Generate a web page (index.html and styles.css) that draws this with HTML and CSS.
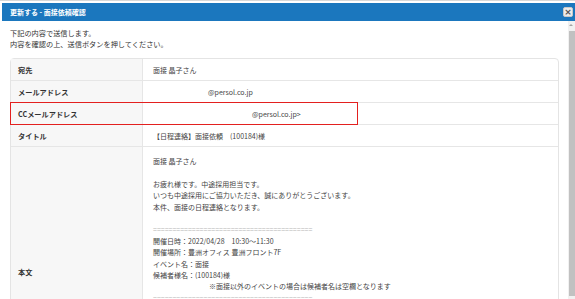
FILE: index.html
```html
<!DOCTYPE html>
<html lang="ja">
<head>
<meta charset="utf-8">
<title>更新する - 面接依頼確認</title>
<link rel="stylesheet" href="styles.css">
</head>
<body>
<div class="frame">
  <div class="modal">
    <div class="modal-header">
      <span class="modal-title">更新する - 面接依頼確認</span>
      <button class="close-btn" type="button">×</button>
    </div>
    <div class="modal-main">
      <div class="modal-content">
        <p class="intro">下記の内容で送信します。<br>内容を確認の上、送信ボタンを押してください。</p>
        <div class="detail">
          <div class="row">
            <div class="label">宛先</div>
            <div class="value">面接 晶子さん</div>
          </div>
          <div class="row">
            <div class="label">メールアドレス</div>
            <div class="value"><span class="blank b1"></span>@persol.co.jp</div>
          </div>
          <div class="row row-marked">
            <div class="label">CCメールアドレス</div>
            <div class="value"><span class="blank b2"></span>@persol.co.jp&gt;</div>
            <div class="mark"></div>
          </div>
          <div class="row">
            <div class="label">タイトル</div>
            <div class="value">【日程連絡】面接依頼　(100184)様</div>
          </div>
          <div class="row row-body">
            <div class="label">本文</div>
            <div class="value body-text">面接 晶子さん

お疲れ様です。中途採用担当です。
いつも中途採用にご協力いただき、誠にありがとうございます。
本件、面接の日程連絡となります。

<span class="rule">=========================================</span>
開催日時：2022/04/28　10:30～11:30
開催場所：豊洲オフィス 豊洲フロント7F
イベント名：面接
候補者様名：(100184)様
　　　　　　　　※面接以外のイベントの場合は候補者名は空欄となります
<span class="rule">=========================================</span>
</div>
          </div>
        </div>
      </div>
      <div class="scrollbar">
        <div class="scroll-arrow"></div>
        <div class="scroll-thumb"></div>
      </div>
    </div>
  </div>
</div>
</body>
</html>
```

FILE: styles.css
```css
html, body {
  margin: 0;
  padding: 0;
  background: #ffffff;
}

.frame {
  width: 575px;
  height: 299px;
  overflow: hidden;
  box-sizing: border-box;
  border-top: 1px solid #d8d8d8;
  padding: 2px 0 0 2px;
  font-family: "Noto Sans CJK JP", "Noto Sans", sans-serif;
  color: #3a3a3a;
}

.modal {
  display: flex;
  flex-direction: column;
  height: 296px;
}

.modal-header {
  height: 18px;
  flex: none;
  background: #1b77be;
  display: flex;
  align-items: center;
  justify-content: space-between;
  padding: 0 2px 0 8px;
}

.modal-title {
  color: #ffffff;
  font-weight: bold;
  font-size: 7px;
  line-height: 1;
}

.close-btn {
  width: 10px;
  height: 10px;
  padding: 0;
  margin: 0;
  border: 1px solid #c9c9c9;
  border-radius: 2px;
  background: #ececec;
  color: #555;
  font-size: 9px;
  font-weight: bold;
  line-height: 7px;
  font-family: "DejaVu Sans", sans-serif;
  display: flex;
  align-items: center;
  justify-content: center;
}

.modal-main {
  flex: 1;
  display: flex;
  min-height: 0;
}

.modal-content {
  flex: 1;
  padding: 7px 9px 0 8px;
  overflow: hidden;
}

.intro {
  margin: 0 0 9px 0;
  font-size: 7.2px;
  line-height: 10.5px;
  color: #333;
}

.detail {
  border: 1px solid #e4e4e4;
  border-radius: 4px;
}

.row {
  display: grid;
  grid-template-columns: 132px 1fr;
  border-bottom: 1px solid #e6e6e6;
  min-height: 21px;
}

.row-marked {
  position: relative;
}

.label {
  background: #f7f7f7;
  border-right: 1px solid #e6e6e6;
  padding-left: 7px;
  font-size: 7.2px;
  font-weight: bold;
  color: #333;
  display: flex;
  align-items: center;
}

.value {
  padding-left: 10px;
  font-size: 7px;
  color: #444;
  display: flex;
  align-items: center;
}

.blank {
  display: inline-block;
}

.b1 { width: 55px; }
.b2 { width: 99px; }

.mark {
  position: absolute;
  left: -1px;
  top: -1px;
  width: 348px;
  height: 23px;
  box-sizing: border-box;
  border: 1.5px solid #e3201f;
}

.row-body {
  min-height: 250px;
}

.body-text {
  display: block;
  white-space: pre-wrap;
  line-height: 11.4px;
  padding-top: 9px;
}

.rule {
  color: #b5b5b5;
}

.scrollbar {
  width: 7px;
  flex: none;
  background: #f1f1f1;
  display: flex;
  flex-direction: column;
  align-items: flex-end;
}

.scroll-arrow {
  width: 0;
  height: 0;
  margin: 3px 2px 5px 0;
  border-left: 2px solid transparent;
  border-right: 2px solid transparent;
  border-bottom: 2px solid #a3a3a3;
}

.scroll-thumb {
  width: 6px;
  height: 265px;
  background: #c1c1c1;
}
```
